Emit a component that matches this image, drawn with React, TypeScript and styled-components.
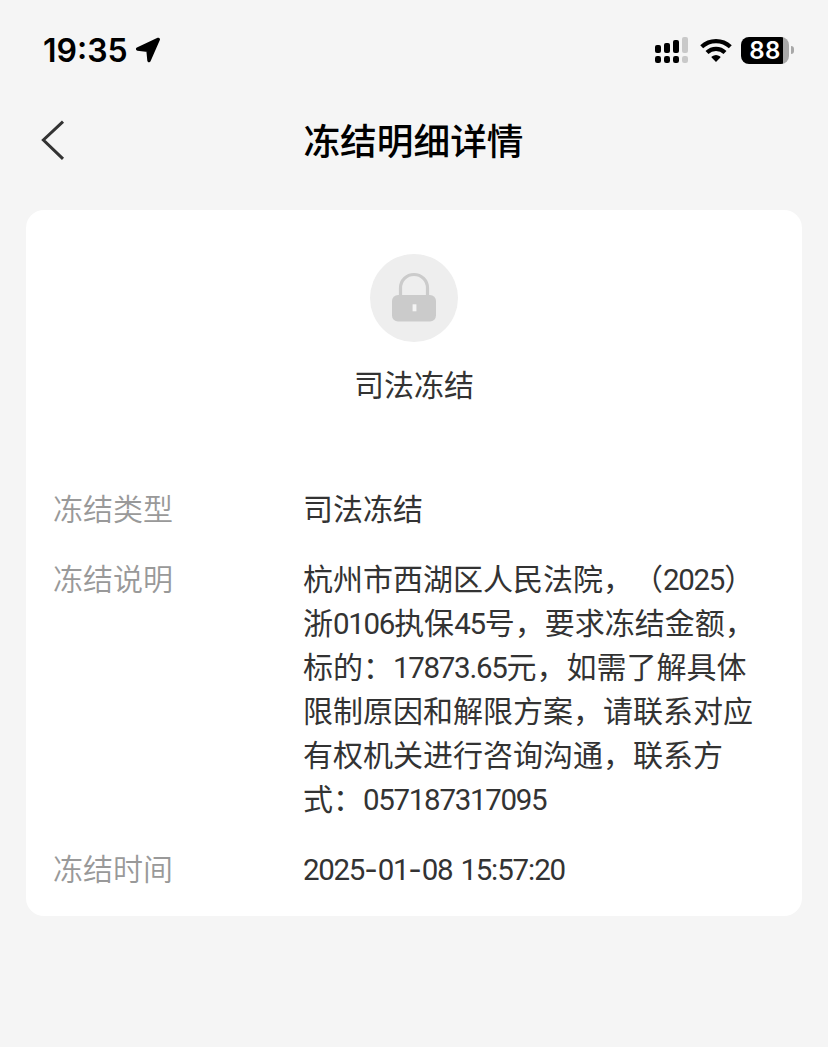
import React from "react";
import styled, { createGlobalStyle } from "styled-components";

const DESCRIPTION = [
  "杭州市西湖区人民法院，（2025）",
  "浙0106执保45号，要求冻结金额，",
  "标的：17873.65元，如需了解具体",
  "限制原因和解限方案，请联系对应",
  "有权机关进行咨询沟通，联系方",
  "式：057187317095"
];

const FROZEN_AT = "2025-01-08 15:57:20";

// digits are set a little narrower than the Chinese text around them
const withDigits = (text: string) =>
  text
    .split(/([0-9][0-9.]*)/)
    .map((part, i) => (i % 2 ? <Digits key={i}>{part}</Digits> : part));

const withMarks = (text: string) =>
  text
    .split(/([-:])/)
    .map((part, i) =>
      i % 2 ? (
        part === "-" ? (
          <HyphenStyled key={i}>-</HyphenStyled>
        ) : (
          <ColonStyled key={i}>{part}</ColonStyled>
        )
      ) : (
        part
      )
    );

const StatusBar: React.FunctionComponent<{}> = () => {
  return (
    <StatusBarStyled>
      <ClockStyled>19:35</ClockStyled>
      <LocationStyled width="26" height="26" viewBox="0 0 26 26">
        <path
          d="M2.6 12 L23.3 2.4 L14 23.6 L13 13.4Z"
          fill="#000"
          stroke="#000"
          strokeWidth="3.4"
          strokeLinejoin="round"
        />
      </LocationStyled>
      <SpacerStyled />
      <SignalStyled width="34" height="27" viewBox="0 0 34 27">
        <g fill="#000">
          <rect x="0" y="8" width="6" height="8" rx="2" />
          <rect x="9" y="6" width="6" height="10" rx="2" />
          <rect x="18" y="3" width="6" height="13" rx="2" />
          <rect x="0" y="19" width="6" height="7" rx="2.2" />
          <rect x="9" y="19" width="6" height="7" rx="2.2" />
          <rect x="18" y="19" width="6" height="7" rx="2.2" />
        </g>
        <g fill="#c9c9c9">
          <rect x="27" y="0" width="6" height="16" rx="2" />
          <rect x="27" y="19" width="6" height="7" rx="2.2" />
        </g>
      </SignalStyled>
      <WifiStyled width="32" height="24" viewBox="0 0 32 24">
        <g fill="none" stroke="#000" strokeWidth="4.2">
          <path d="M1.7 8.8 A20.6 20.6 0 0 1 30.3 8.8" />
          <path d="M7 14.5 A12.9 12.9 0 0 1 25 14.5" />
        </g>
        <path
          d="M16 24 L11.6 19.6 Q11.2 19 11.8 18.6 Q16 15.6 20.2 18.6 Q20.8 19 20.4 19.6Z"
          fill="#000"
        />
      </WifiStyled>
      <BatteryStyled>
        <BatteryLevelStyled>88</BatteryLevelStyled>
      </BatteryStyled>
      <BatteryTipStyled />
    </StatusBarStyled>
  );
};

const App: React.FunctionComponent<{}> = () => {
  return (
    <PageStyled>
      <GlobalStyle />
      <StatusBar />

      <HeaderStyled>
        <BackStyled aria-label="返回">
          <svg width="26" height="42" viewBox="0 0 26 42">
            <path
              d="M24 2.6 L4.4 21 L24 39.8"
              fill="none"
              stroke="#333"
              strokeWidth="3"
            />
          </svg>
        </BackStyled>
        <TitleStyled>冻结明细详情</TitleStyled>
      </HeaderStyled>

      <CardStyled>
        <SummaryStyled>
          <LockCircleStyled>
            <svg width="88" height="88" viewBox="0 0 88 88">
              <path
                d="M30.5 43 V34 A13.5 13.5 0 0 1 57.5 34 V43"
                fill="none"
                stroke="#cbcbcb"
                strokeWidth="3.2"
              />
              <rect x="22" y="41" width="44" height="26.5" rx="6" fill="#cbcbcb" />
              <rect x="42.6" y="50.3" width="3.8" height="7" fill="#f4f4f4" />
            </svg>
          </LockCircleStyled>
          <SummaryTextStyled>司法冻结</SummaryTextStyled>
        </SummaryStyled>

        <DetailsStyled>
          <LabelStyled>冻结类型</LabelStyled>
          <ValueStyled>司法冻结</ValueStyled>

          <LabelStyled>冻结说明</LabelStyled>
          <ValueStyled>
            {DESCRIPTION.map(line => (
              <LineStyled key={line}>{withDigits(line)}</LineStyled>
            ))}
          </ValueStyled>

          <LabelStyled>冻结时间</LabelStyled>
          <ValueStyled>
            <LineStyled>
              <Digits>{withMarks(FROZEN_AT)}</Digits>
            </LineStyled>
          </ValueStyled>
        </DetailsStyled>
      </CardStyled>
    </PageStyled>
  );
};

const GlobalStyle = createGlobalStyle`
  body {
    margin: 0;
    background: #f5f5f5;
  }
`;

const PageStyled = styled.div`
  box-sizing: border-box;
  min-height: 1047px;
  background: #f5f5f5;
  color: #333;
  font-family: "Noto Sans CJK SC", sans-serif;
  font-size: 30px;
  line-height: 44px;
  text-spacing-trim: space-all;
`;

const StatusBarStyled = styled.div`
  display: flex;
  align-items: center;
  height: 100px;
  padding: 0 34px 0 43px;
`;

const ClockStyled = styled.div`
  width: 92px;
  padding-top: 2px;
  color: #000;
  font-family: Inter, sans-serif;
  font-size: 32px;
  font-weight: 600;
  white-space: nowrap;
`;

const LocationStyled = styled.svg`
  flex: none;
`;

const SpacerStyled = styled.div`
  flex: 1;
`;

const SignalStyled = styled.svg`
  margin-right: 11px;
`;

const WifiStyled = styled.svg`
  margin-right: 9px;
`;

const BatteryStyled = styled.div`
  width: 48px;
  height: 27px;
  border-radius: 8px;
  background: linear-gradient(to right, #000 42px, #a8a8a8 42px);
`;

const BatteryLevelStyled = styled.div`
  color: #fff;
  font-family: Inter, sans-serif;
  font-size: 24px;
  font-weight: 600;
  letter-spacing: 0.4px;
  line-height: 27px;
  text-align: center;
`;

const BatteryTipStyled = styled.div`
  width: 3px;
  height: 8px;
  margin-left: 2px;
  border-radius: 0 4px 4px 0;
  background: #a8a8a8;
`;

const HeaderStyled = styled.header`
  display: grid;
  grid-template-columns: 100px 1fr 100px;
  align-items: center;
  height: 80px;
  padding: 0 38px 0 39px;
`;

const BackStyled = styled.button`
  display: flex;
  width: 44px;
  padding: 0;
  border: 0;
  background: none;
`;

const TitleStyled = styled.h1`
  margin: 0 2px 3px 0;
  color: #000;
  font-size: 36.7px;
  font-weight: 500;
  text-align: center;
`;

const CardStyled = styled.main`
  margin: 30px 26px 0;
  padding: 44px 27px 27px;
  border-radius: 18px;
  background: #fff;
`;

const SummaryStyled = styled.div`
  display: flex;
  flex-direction: column;
  align-items: center;
  gap: 19px;
  margin-bottom: 80px;
`;

const LockCircleStyled = styled.div`
  width: 88px;
  height: 88px;
  border-radius: 50%;
  background: #eee;
`;

const SummaryTextStyled = styled.div`
  color: #333;
`;

const DetailsStyled = styled.dl`
  display: grid;
  grid-template-columns: 250px 1fr;
  row-gap: 26px;
  margin: 0;
`;

const LabelStyled = styled.dt`
  color: #999;
  font-weight: 350;
`;

const ValueStyled = styled.dd`
  margin: 0;
`;

const LineStyled = styled.div`
  height: 44px;
  white-space: nowrap;
`;

const Digits = styled.span`
  font-family: Roboto, sans-serif;
  font-size: 29.5px;
  letter-spacing: -1.3px;
  line-height: 0;
  word-spacing: 2px;
`;

const HyphenStyled = styled.span`
  font-family: Inter, sans-serif;
  letter-spacing: 0;
`;

const ColonStyled = styled.span`
  letter-spacing: -0.8px;
`;

export default App;
